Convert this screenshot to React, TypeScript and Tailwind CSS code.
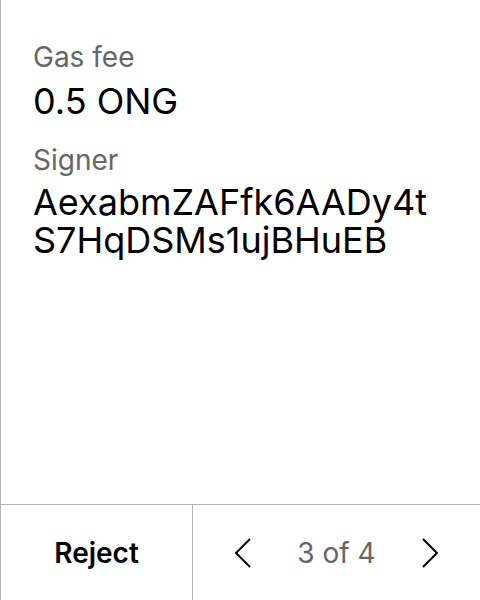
export default function App() {
  return (
    <div
      className="flex h-[600px] w-[480px] flex-col border-l border-[#b5b5b5] bg-white text-black"
      style={{ fontFamily: "Inter, 'Noto Sans', sans-serif" }}
    >
      {/* Transaction details */}
      <div className="flex-1 px-8 pt-[40px]">
        <div className="text-[28px] leading-[34px] text-[#666666]">Gas fee</div>
        <div className="mt-[5px] text-[36px] leading-[44px]">0.5 ONG</div>
        <div className="mt-[20px] text-[28px] leading-[34px] text-[#666666]">Signer</div>
        <div className="mt-[6px] text-[36px] leading-[38px]">
          <div>AexabmZAFfk6AADy4t</div>
          <div>S7HqDSMs1ujBHuEB</div>
        </div>
      </div>

      {/* Footer actions */}
      <div className="flex h-[96px] border-t border-[#b5b5b5]">
        <button className="flex w-[192px] items-center justify-center border-r border-[#b5b5b5] text-[28px] font-semibold">
          Reject
        </button>
        <div className="flex flex-1 items-center justify-center gap-[45px]">
          <svg width="18" height="30" viewBox="0 0 18 30" fill="none" stroke="black" strokeWidth="2">
            <path d="M16 1 L2 15 L16 29" />
          </svg>
          <span className="text-[28px] text-[#666666]">3 of 4</span>
          <svg width="18" height="30" viewBox="0 0 18 30" fill="none" stroke="black" strokeWidth="2">
            <path d="M2 1 L16 15 L2 29" />
          </svg>
        </div>
      </div>
    </div>
  );
}
